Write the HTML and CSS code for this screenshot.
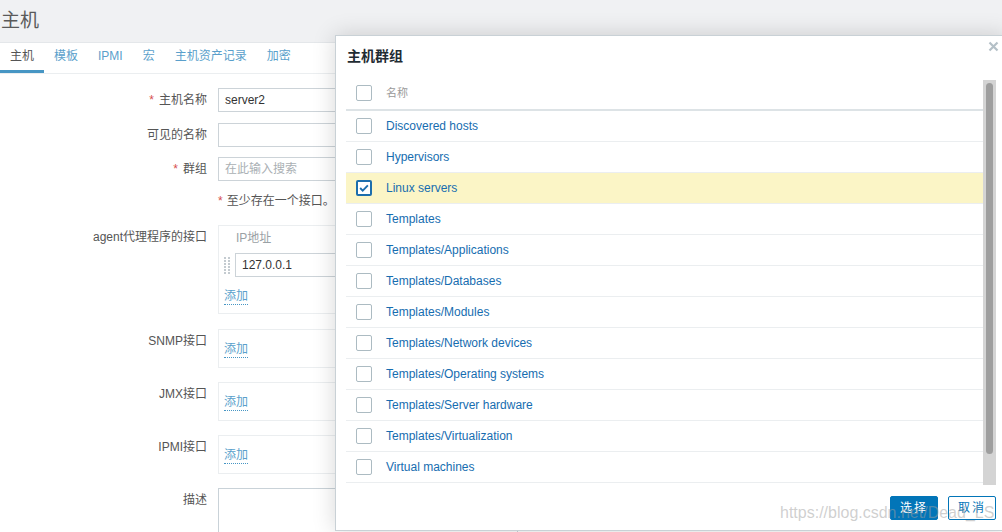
FILE: index.html
```html
<!DOCTYPE html>
<html lang="zh">
<head>
<meta charset="utf-8">
<title>主机</title>
<link rel="stylesheet" href="styles.css">
</head>
<body>
<div class="page">
  <header class="page-head"><h1 class="page-title">主机</h1></header>
  <nav class="tabs">
    <a class="tab active">主机</a>
    <a class="tab">模板</a>
    <a class="tab">IPMI</a>
    <a class="tab">宏</a>
    <a class="tab">主机资产记录</a>
    <a class="tab">加密</a>
  </nav>
  <div class="form">
    <div class="row r-name">
      <div class="lbl"><span class="req">*</span>主机名称</div>
      <div class="field"><div class="input">server2</div></div>
    </div>
    <div class="row r-visible">
      <div class="lbl">可见的名称</div>
      <div class="field"><div class="input"></div></div>
    </div>
    <div class="row r-group">
      <div class="lbl"><span class="req">*</span>群组</div>
      <div class="field"><div class="input placeholder">在此输入搜索</div></div>
    </div>
    <div class="row r-note">
      <div class="lbl"></div>
      <div class="field note"><span class="req">*</span>至少存在一个接口。</div>
    </div>
    <div class="row r-agent">
      <div class="lbl">agent代理程序的接口</div>
      <div class="field">
        <div class="ifbox agent">
          <div class="if-head">IP地址</div>
          <div class="if-row">
            <svg class="drag" width="6" height="17" viewBox="0 0 6 17">
              <g fill="#c4cbd0">
                <rect x="0" y="0" width="2" height="2"/><rect x="4" y="0" width="2" height="2"/>
                <rect x="0" y="3" width="2" height="2"/><rect x="4" y="3" width="2" height="2"/>
                <rect x="0" y="6" width="2" height="2"/><rect x="4" y="6" width="2" height="2"/>
                <rect x="0" y="9" width="2" height="2"/><rect x="4" y="9" width="2" height="2"/>
                <rect x="0" y="12" width="2" height="2"/><rect x="4" y="12" width="2" height="2"/>
                <rect x="0" y="15" width="2" height="2"/><rect x="4" y="15" width="2" height="2"/>
              </g>
            </svg>
            <div class="input ip">127.0.0.1</div>
          </div>
          <a class="add">添加</a>
        </div>
      </div>
    </div>
    <div class="row r-if">
      <div class="lbl">SNMP接口</div>
      <div class="field"><div class="ifbox small"><a class="add">添加</a></div></div>
    </div>
    <div class="row r-if">
      <div class="lbl">JMX接口</div>
      <div class="field"><div class="ifbox small"><a class="add">添加</a></div></div>
    </div>
    <div class="row r-if">
      <div class="lbl">IPMI接口</div>
      <div class="field"><div class="ifbox small"><a class="add">添加</a></div></div>
    </div>
    <div class="row r-desc">
      <div class="lbl">描述</div>
      <div class="field"><div class="textarea"></div></div>
    </div>
  </div>
</div>

<div class="dialog">
  <div class="dlg-head">主机群组</div>
  <svg class="dlg-close" width="11" height="11" viewBox="0 0 11 11">
    <path d="M1.5 1.5 L9.5 9.5 M9.5 1.5 L1.5 9.5" stroke="#b4c0c7" stroke-width="2.2" fill="none"/>
  </svg>
  <div class="dlg-body">
    <div class="tbl">
      <div class="tr th">
        <div class="cb-cell"><span class="cb"></span></div>
        <div class="name-h">名称</div>
      </div>
      <div class="tr"><div class="cb-cell"><span class="cb"></span></div><a class="name">Discovered hosts</a></div>
      <div class="tr"><div class="cb-cell"><span class="cb"></span></div><a class="name">Hypervisors</a></div>
      <div class="tr selected"><div class="cb-cell"><span class="cb checked"><svg width="14" height="14" viewBox="0 0 14 14"><path d="M2.5 7 L5.5 10 L11.5 4" stroke="#1c6ead" stroke-width="2.2" fill="none"/></svg></span></div><a class="name">Linux servers</a></div>
      <div class="tr"><div class="cb-cell"><span class="cb"></span></div><a class="name">Templates</a></div>
      <div class="tr"><div class="cb-cell"><span class="cb"></span></div><a class="name">Templates/Applications</a></div>
      <div class="tr"><div class="cb-cell"><span class="cb"></span></div><a class="name">Templates/Databases</a></div>
      <div class="tr"><div class="cb-cell"><span class="cb"></span></div><a class="name">Templates/Modules</a></div>
      <div class="tr"><div class="cb-cell"><span class="cb"></span></div><a class="name">Templates/Network devices</a></div>
      <div class="tr"><div class="cb-cell"><span class="cb"></span></div><a class="name">Templates/Operating systems</a></div>
      <div class="tr"><div class="cb-cell"><span class="cb"></span></div><a class="name">Templates/Server hardware</a></div>
      <div class="tr"><div class="cb-cell"><span class="cb"></span></div><a class="name">Templates/Virtualization</a></div>
      <div class="tr"><div class="cb-cell"><span class="cb"></span></div><a class="name">Virtual machines</a></div>
    </div>
    <div class="scrollbar"><div class="thumb"></div></div>
  </div>
  <div class="dlg-foot">
    <button class="btn primary">选择</button>
    <button class="btn secondary">取消</button>
  </div>
</div>

<div class="watermark">https://blog.csdn.net/Dead_LS</div>
</body>
</html>
```
FILE: styles.css
```css
html, body {
  margin: 0;
  padding: 0;
}
body {
  width: 1002px;
  height: 532px;
  overflow: hidden;
  position: relative;
  background: #fff;
  color: #1f2c33;
  font: 12px "Liberation Sans", "Noto Sans CJK SC", sans-serif;
}

/* ---------- page header ---------- */
.page-head {
  height: 42px;
  background: #f0f1f3;
  border-bottom: 1px solid #e4e7ea;
}
.page-title {
  margin: 0;
  font-size: 19px;
  font-weight: normal;
  line-height: 42px;
  color: #5a5a5a;
  padding-left: 1px;
}

/* ---------- tabs ---------- */
.tabs {
  display: flex;
  height: 30px;
  border-bottom: 1px solid #ebeef0;
}
.tab {
  box-sizing: border-box;
  height: 30px;
  padding: 0 10px;
  line-height: 27px;
  color: #5a9fcb;
  border-bottom: 3px solid transparent;
}
.tab.active {
  color: #555;
  border-bottom-color: #4796c4;
}

/* ---------- form ---------- */
.form {
  padding-top: 14px;
}
.row {
  display: flex;
}
.lbl {
  flex: none;
  width: 218px;
  box-sizing: border-box;
  padding-right: 11px;
  text-align: right;
  line-height: 24px;
  color: #555;
}
.field {
  flex: 1;
}
.req {
  color: #d64e4e;
  margin-right: 5px;
}
.r-name { margin-bottom: 11px; }
.r-visible { margin-bottom: 10px; }
.r-group { margin-bottom: 8px; }
.r-note { margin-bottom: 12px; }
.r-agent { margin-bottom: 15px; }
.r-if { margin-bottom: 14px; }

.input {
  box-sizing: border-box;
  width: 300px;
  height: 24px;
  border: 1px solid #ccd3d8;
  padding: 0 6px;
  line-height: 22px;
  color: #333;
  background: #fff;
}
.input.placeholder {
  color: #aab0b4;
}
.note {
  line-height: 24px;
  color: #555;
}
.note .req {
  margin-right: 4px;
}

.ifbox {
  box-sizing: border-box;
  width: 300px;
  border: 1px solid #ebeef0;
  padding: 0 5px;
}
.ifbox.agent {
  padding-bottom: 8px;
}
.ifbox.small {
  padding: 12px 5px 9px;
}
.if-head {
  padding-left: 12px;
  line-height: 24px;
  color: #9aa1a5;
}
.if-row {
  display: flex;
  align-items: center;
  gap: 5px;
  margin-top: 3px;
  margin-bottom: 12px;
}
.drag {
  flex: none;
}
.input.ip {
  width: 200px;
}
.add {
  display: inline-block;
  line-height: 15px;
  color: #5a9fcb;
  border-bottom: 1px dotted #4796c4;
}
.textarea {
  box-sizing: border-box;
  width: 300px;
  height: 60px;
  border: 1px solid #c9d2d8;
}

/* ---------- dialog ---------- */
.dialog {
  position: absolute;
  left: 335px;
  top: 35px;
  width: 672px;
  height: 496px;
  box-sizing: border-box;
  border: 1px solid #c9d1d6;
  background: #fff;
  box-shadow: 0 0 22px rgba(0, 0, 0, 0.16);
  padding: 0 10px;
  display: flex;
  flex-direction: column;
}
.dlg-head {
  padding: 12px 1px 16px;
  font-size: 14px;
  font-weight: bold;
  line-height: 16px;
  color: #1f2c33;
}
.dlg-close {
  position: absolute;
  top: 5px;
  right: 7px;
}
.dlg-body {
  display: flex;
  height: 405px;
}
.tbl {
  flex: 1;
}
.tr {
  display: flex;
  align-items: center;
  height: 30px;
  border-bottom: 1px solid #ebeef0;
}
.tr.th {
  box-sizing: border-box;
  height: 31px;
  align-items: flex-start;
  padding-top: 5px;
  border-bottom: 2px solid #dde3e6;
}
.tr.selected {
  background: #fbf5c6;
}
.cb-cell {
  flex: none;
  width: 40px;
  box-sizing: border-box;
  padding-left: 10px;
  display: flex;
}
.cb {
  box-sizing: border-box;
  width: 16px;
  height: 16px;
  border: 1px solid #acbbc2;
  border-radius: 2px;
  background: #fff;
  display: flex;
  align-items: center;
  justify-content: center;
}
.cb.checked {
  border: 2px solid #1c6ead;
}
.name-h {
  color: #9a9a9a;
  font-size: 11px;
  line-height: 16px;
}
.name {
  color: #166db0;
}
.scrollbar {
  flex: none;
  width: 13px;
  box-sizing: border-box;
  padding: 3px 3px 0;
  background: #d4d4d4;
}
.thumb {
  height: 371px;
  border-radius: 4px;
  background: #9e9e9e;
}
.dlg-foot {
  display: flex;
  justify-content: flex-end;
  gap: 10px;
  padding: 11px 0 10px;
}
.btn {
  box-sizing: border-box;
  width: 48px;
  height: 24px;
  margin: 0;
  padding: 0;
  border: 1px solid #0275b8;
  border-radius: 2px;
  font: 12px "Liberation Sans", "Noto Sans CJK SC", sans-serif;
  line-height: 22px;
  letter-spacing: 2px;
  text-align: center;
}
.btn.primary {
  background: #0275b8;
  color: #fff;
}
.btn.secondary {
  background: #fff;
  color: #0275b8;
}

/* ---------- watermark ---------- */
.watermark {
  position: absolute;
  left: 780px;
  top: 503px;
  font-size: 16px;
  line-height: 20px;
  color: rgba(160, 160, 160, 0.5);
  white-space: nowrap;
}
```
